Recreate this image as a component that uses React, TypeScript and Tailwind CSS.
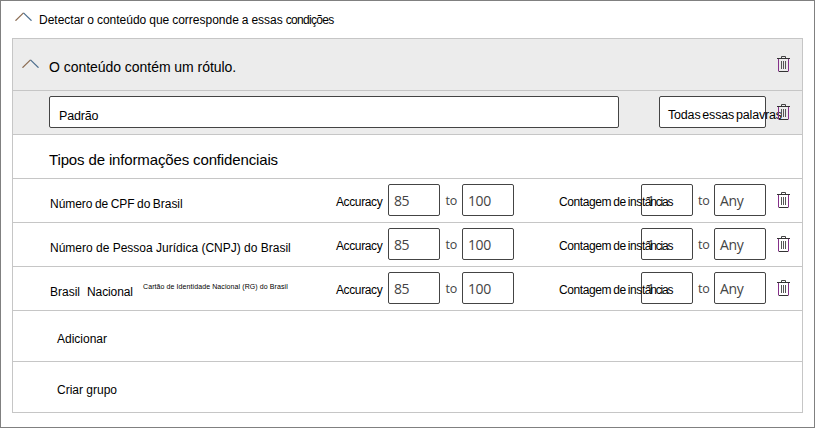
import React from "react";

const sans = "font-['Liberation_Sans',Arial,sans-serif] text-black";
const field = "h-8 shrink-0 rounded-[2px] border border-[#444] bg-white";
const value = "pl-[5px] pt-px font-['Open_Sans','Noto_Sans',sans-serif] text-[14px] leading-[30px] tracking-[-0.4px] text-[#444]";
const toText = "w-[22px] shrink-0 pl-[5.5px] pt-[7px] font-['Open_Sans','Noto_Sans',sans-serif] text-[12.5px] leading-[20px] tracking-[-0.3px] text-[#444]";

function Chevron() {
  return (
    <svg width="17" height="9" viewBox="0 0 17 9" fill="none" className="shrink-0" strokeWidth="1.2">
      <path d="M.5 8.7 8.5 .9" stroke="#8a6a50" />
      <path d="m8.5 .9 8 7.8" stroke="#4a6c8c" />
    </svg>
  );
}

function Trash() {
  return (
    <svg width="13" height="16" viewBox="0 0 13 16" fill="none" className="shrink-0">
      <path d="M4.5 2V.5h4V2" stroke="#444" />
      <path d="M0 2.5h13M2 15.5h9" stroke="#333" />
      <path d="M1.5 3v12.5M11.5 3v12.5" stroke="#85308a" />
      <path d="M4.5 5v8M6.5 5v8M8.5 5v8" stroke="#555" />
    </svg>
  );
}

function InfoRow({ children }: { children: React.ReactNode }) {
  return (
    <div className="flex h-11 items-start border-b border-[#c6c6c6] pt-[5px] whitespace-nowrap">
      <div className={`${sans} flex w-[323px] shrink-0 pl-[37px] pt-[12px] text-[12px] leading-[16px]`}>{children}</div>
      <div className={`${sans} w-[52px] shrink-0 pt-[10px] text-[12px] leading-[16px] tracking-[-0.38px]`}>Accuracy</div>
      <div className={`${field} ${value} w-[52px]`}>85</div>
      <div className={toText}>to</div>
      <div className={`${field} ${value} w-[52px]`}>100</div>
      <div className={`${sans} relative z-10 ml-[45px] w-[82px] shrink-0 pt-[10px] text-[12px] leading-[16px] tracking-[-0.4px] [word-spacing:-0.9px]`}>
        Contagem de inst<span className="tracking-[-1.2px]">âncias</span>
      </div>
      <div className={`${field} ${value} w-[52px]`}>1</div>
      <div className={`${toText} !w-[21px] !pl-[5px]`}>to</div>
      <div className={`${field} ${value} w-[52px]`}>Any</div>
      <div className="ml-[11px] mt-[8px]"><Trash /></div>
    </div>
  );
}

export default function App() {
  return (
    <div className="h-[428px] w-[815px] overflow-hidden border border-[#808080] bg-white">
      <div className={`${sans} flex h-[37px] items-start pl-[14px] pt-[11px] whitespace-nowrap`}>
        <Chevron />
        <div className="ml-[7px] text-[12px] leading-[16px] [word-spacing:-0.4px]">
          Detectar o conteúdo que corresponde a essas <span className="tracking-[-0.7px]">condições</span>
        </div>
      </div>
      <div className="ml-[11px] w-[791px] border border-b-0 border-[#c6c6c6]">
        <div className="flex h-[52px] items-start border-b border-[#c6c6c6] bg-[#ececec] pt-[17px] whitespace-nowrap">
          <div className="ml-[9px] mt-[3px]"><Chevron /></div>
          <div className={`${sans} ml-[10px] w-[728px] shrink-0 pt-[2px] text-[14px] leading-[18px] tracking-[-0.04px]`}>O conteúdo contém um rótulo.</div>
          <Trash />
        </div>
        <div className="flex h-11 items-start border-b border-[#c6c6c6] bg-[#ececec] pl-[36px] pt-[5px] whitespace-nowrap">
          <div className={`${field} ${sans} w-[570px] pl-[9px] pt-[11px] text-[12.5px] leading-[16px] tracking-[-0.15px]`}>Padrão</div>
          <div className={`${field} ${sans} relative z-10 ml-[40px] w-[107px] pl-[8px] pt-[10px] text-[12.5px] leading-[16px] tracking-[-0.18px] [word-spacing:-1.4px]`}>Todas essas palavras</div>
          <div className="relative z-20 ml-[11px] mt-[8px]"><Trash /></div>
        </div>
        <div className={`${sans} h-11 border-b border-[#c6c6c6] pl-[36px] pt-[16px] text-[15px] leading-[18px] tracking-[-0.14px]`}>Tipos de informações confidenciais</div>
        <InfoRow><span className="tracking-[-0.04px] [word-spacing:-0.8px]">Número de CPF do Brasil</span></InfoRow>
        <InfoRow><span>Número de Pessoa Jurídica (CNPJ) do Brasil</span></InfoRow>
        <InfoRow>
          <span className="w-[37px]">Brasil</span>
          <span className="w-[56px] tracking-[-0.1px]">Nacional</span>
          <span className="-mt-[2px] text-[7px] leading-[9px] tracking-[0.09px]">Cartão de Identidade Nacional (RG) do Brasil</span>
        </InfoRow>
        <div className={`${sans} h-[51px] border-b border-[#c6c6c6] pl-[44px] pt-[20px] text-[12px] leading-[16px]`}>Adicionar</div>
        <div className={`${sans} h-[51px] border-b border-[#c6c6c6] pl-[44px] pt-[20px] text-[12px] leading-[16px]`}>Criar grupo</div>
      </div>
    </div>
  );
}
